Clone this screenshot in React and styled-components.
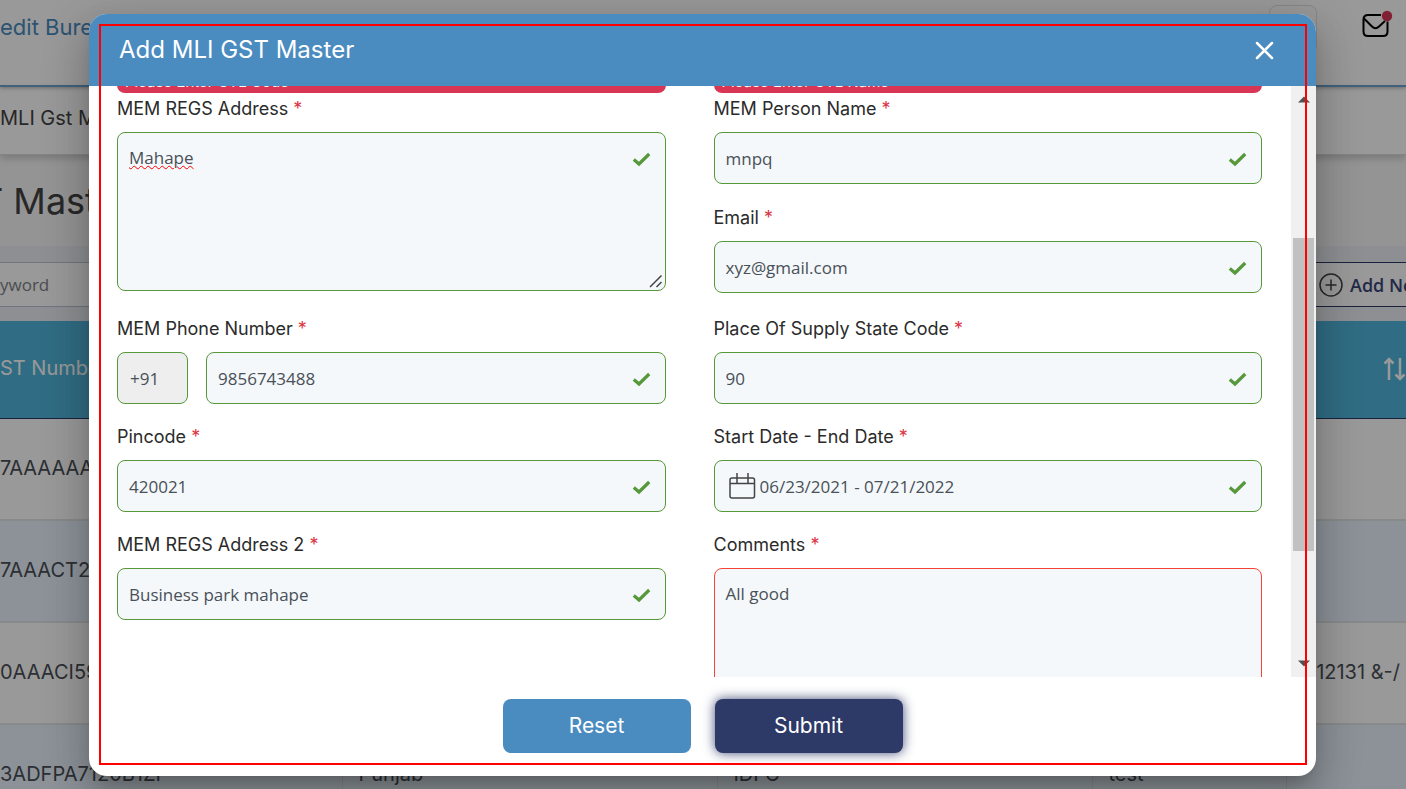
import React from "react";
import styled, { createGlobalStyle, css } from "styled-components";

const display = `Inter, "Liberation Sans", sans-serif`;
const body = `"Open Sans", "Noto Sans", sans-serif`;

const GlobalStyle = createGlobalStyle`
  * { box-sizing: border-box; }
  html, body, #root { height: 100%; }
  body { margin: 0; overflow: hidden; background: #fff; font-family: ${display}; color: #444; }
`;

const Screen = styled.div`
  position: relative;
  height: 100%;
  overflow: hidden;
`;

/* ---------- page behind the dialog ---------- */

const Page = styled.div`
  height: 100%;
  overflow: hidden;
  display: flex;
  flex-direction: column;
  white-space: nowrap;
`;

const TopBar = styled.header`
  position: relative;
  z-index: 1;
  flex: none;
  height: 87px;
  display: flex;
  justify-content: space-between;
  border-bottom: 2px solid #6ba3d0;
  box-shadow: 0 1px 4px rgba(0, 0, 0, 0.3);
`;

const Brand = styled.span`
  padding-top: 12px;
  font-size: 22px;
  line-height: 30px;
  color: #4a8bc0;
`;

const TopActions = styled.div`
  display: flex;
  gap: 44px;
  padding: 5px 13px 0 0;
`;

const Avatar = styled.div`
  width: 48px;
  height: 48px;
  border: 1px solid #e2e2e2;
  border-radius: 8px;
`;

const MailButton = styled.button`
  height: 36px;
  padding: 4px 0 0;
  border: 0;
  background: none;
`;

const Crumbs = styled.nav`
  position: relative;
  flex: none;
  height: 68px;
  padding-top: 18px;
  font-size: 20px;
  line-height: 26px;
  background: #fff;
  border-bottom: 1px solid #ddd;
  box-shadow: 0 3px 8px rgba(0, 0, 0, 0.2);
`;

const PageTitle = styled.h1`
  flex: none;
  height: 91px;
  margin: 0;
  padding-top: 24px;
  font-size: 36px;
  line-height: 44px;
  font-weight: 400;
  text-indent: -20px;
  background: #f7f7f7;
`;

const Toolbar = styled.div`
  flex: none;
  height: 75px;
  padding-top: 16px;
  display: flex;
  justify-content: space-between;
  align-items: flex-start;
  background: #edeff4;
`;

const Search = styled.input`
  width: 300px;
  height: 45px;
  padding: 0;
  border: 1px solid #b9c2d0;
  border-left: 0;
  background: #fff;
  font: 17px ${body};
  color: #333;
  &::placeholder { color: #7c8288; opacity: 1; }
`;

const AddButton = styled.button`
  width: 98px;
  height: 45px;
  padding: 0 0 0 10px;
  display: flex;
  align-items: center;
  gap: 7px;
  overflow: hidden;
  border: 1px solid #2d3966;
  border-right: 0;
  background: #fff;
  color: #3b4678;
  font: 600 18px ${body};
  white-space: nowrap;
  svg { flex: none; }
`;

const Table = styled.table`
  width: 100%;
  table-layout: fixed;
  border-collapse: collapse;
  font-size: 20px;
  text-align: left;
`;

const Th = styled.th`
  height: 97px;
  padding: 0 0 2px;
  overflow: hidden;
  font-weight: 400;
  color: #fff;
  background: #51b6dc;
  border-bottom: 1px solid #2d3966;
  text-align: ${(p) => (p.$end ? "right" : "left")};
  svg { display: inline-block; vertical-align: middle; }
`;

const Tr = styled.tr`
  height: 102px;
  background: ${(p) => (p.$tint ? "#e9f3fd" : "#fff")};
`;

const Td = styled.td`
  padding: 0 6px 2px ${(p) => (p.$first ? 0 : 16)}px;
  border-bottom: 2px solid #e3e5e7;
  border-right: ${(p) => (p.$end ? 0 : 1)}px solid #dfe1e3;
  text-align: ${(p) => (p.$end ? "right" : "left")};
  color: #4a4f56;
`;

/* ---------- dialog ---------- */

const Backdrop = styled.div`
  position: absolute;
  inset: 0;
  z-index: 2;
  display: flex;
  padding: 14px 90px 13px 89px;
  background: rgba(0, 0, 0, 0.4);
`;

const Dialog = styled.section`
  flex: 1;
  min-width: 0;
  display: flex;
  flex-direction: column;
  overflow: hidden;
  border-radius: 18px;
  background: #fff;
  box-shadow: 0 11px 15px -7px rgba(0, 0, 0, 0.2), 0 24px 38px 3px rgba(0, 0, 0, 0.14),
    0 9px 46px 8px rgba(0, 0, 0, 0.12);
`;

const Highlight = styled.div`
  position: absolute;
  inset: 24px 99px;
  border: 2px solid #f00;
  pointer-events: none;
`;

const DialogHeader = styled.header`
  flex: none;
  height: 72px;
  padding: 0 40px 0 30px;
  display: flex;
  align-items: center;
  justify-content: space-between;
  background: #4a8bc0;
  color: #fff;
`;

const DialogTitle = styled.h2`
  margin: 0;
  font-size: 24px;
  line-height: 32px;
  font-weight: 400;
`;

const CloseButton = styled.button`
  height: 24px;
  padding: 0;
  border: 0;
  background: none;
  svg { display: block; }
`;

const DialogBody = styled.div`
  flex: 1;
  min-height: 0;
  display: flex;
  overflow: hidden;
`;

const Form = styled.form`
  flex: 1;
  min-width: 0;
  margin-top: -20px;
  padding: 0 29px 0 28px;
`;

const Row = styled.div`
  display: grid;
  grid-template-columns: 1fr 1fr;
  column-gap: 48px;
  margin-bottom: ${(p) => p.$gap || 0}px;
`;

const Stack = styled.div`
  display: flex;
  flex-direction: column;
  gap: 21px;
`;

const ErrorNote = styled.p`
  height: 27px;
  margin: 0;
  padding: 6px 8px 1px;
  border-radius: 8px;
  background: #d93655;
  color: #fff;
  font-size: 15px;
  line-height: 20px;
`;

const FieldBox = styled.div`
  display: flex;
  flex-direction: column;
  gap: 11px;
`;

const Label = styled.label`
  padding-top: 1px;
  font-size: 18px;
  line-height: 24px;
  color: #2b2b2b;
  white-space: nowrap;
  span { color: #dc3545; }
`;

const Control = styled.div`
  position: relative;
  display: flex;
  gap: 18px;
`;

const inputStyle = css`
  width: 100%;
  min-width: 0;
  border: 1px solid ${(p) => (p.$invalid ? "#f44336" : "#56983a")};
  border-radius: 8px;
  background: #f4f8fb;
  color: #495057;
  font-family: ${body};
  font-size: 17px;
  outline: none;
`;

const Input = styled.input`
  ${inputStyle}
  height: 52px;
  padding: 0 48px 0 ${(p) => (p.$icon ? 45 : 11)}px;
`;

const Prefix = styled(Input)`
  flex: none;
  width: 71px;
  padding: 0 12px;
  background: #eee;
`;

const TextArea = styled.textarea`
  ${inputStyle}
  display: block;
  height: 159px;
  padding: 12px 48px 12px 11px;
  line-height: 26px;
  resize: none;
  ${(p) => p.$misspelt && "text-decoration: underline wavy #f00 1px;"}
`;

const Check = styled.svg`
  position: absolute;
  top: 20px;
  right: 15px;
`;

const Grip = styled.svg`
  position: absolute;
  right: 3px;
  bottom: 3px;
`;

const CalendarIcon = styled.svg`
  position: absolute;
  top: 12px;
  left: 14px;
`;

const Scrollbar = styled.div`
  flex: none;
  width: 25px;
  padding: 10px 2px;
  display: flex;
  flex-direction: column;
  align-items: center;
  background: #f0f0f0;
`;

const Track = styled.div`
  flex: 1;
  align-self: stretch;
  padding-top: 135px;
`;

const Thumb = styled.div`
  height: 313px;
  background: #c1c1c1;
`;

const DialogFooter = styled.footer`
  flex: none;
  padding: 22px 0 23px;
  display: flex;
  justify-content: center;
  gap: 24px;
`;

const ActionButton = styled.button`
  width: 188px;
  height: 54px;
  padding: 0 0 2px;
  border: 0;
  border-radius: 8px;
  font: 400 21px ${display};
  color: #fff;
  background: ${(p) => (p.$primary ? "#2d3966" : "#4a8bc0")};
  box-shadow: ${(p) => (p.$primary ? "0 0 12px rgba(45, 57, 102, 0.9)" : "none")};
`;

function Tick() {
  return (
    <Check width="19" height="15" viewBox="0 0 19 15" aria-hidden="true">
      <path d="M1.800 7.500 7 12 17.200 2" fill="none" stroke="#56983a" strokeWidth="3.200" />
    </Check>
  );
}

function Field({ id, label, children }) {
  return (
    <FieldBox>
      <Label htmlFor={id}>
        {label} <span>*</span>
      </Label>
      <Control>{children}</Control>
    </FieldBox>
  );
}

function TextField({ id, label, value }) {
  return (
    <Field id={id} label={label}>
      <Input id={id} defaultValue={value} />
      <Tick />
    </Field>
  );
}

const rows = [
  ["7AAAAAA0000A1Z", "", "", "", ""],
  ["7AAACT2727Q1Z", "", "", "", ""],
  ["0AAACI5950L1Z", "", "", "", "12131 &-/"],
  ["3ADFPA7120B1ZF", "Punjab", "IDFC", "test", ""],
];

export default function App() {
  return (
    <Screen>
      <GlobalStyle />
      <Page>
        <TopBar>
          <Brand>edit Bureau</Brand>
          <TopActions>
            <Avatar />
            <MailButton aria-label="Messages">
              <svg width="32" height="30" viewBox="0 0 32 30" fill="none">
                <path
                  d="M20 6H7Q2.500 6 2.500 10.500V22.500Q2.500 27 7 27H22Q26.500 27 26.500 22.500V12.500"
                  stroke="#000"
                  strokeWidth="2"
                />
                <path d="M3 9.500 11 17.500Q14.500 21 18 17.500L24 12" stroke="#000" strokeWidth="2" />
                <circle cx="26" cy="7" r="5.200" fill="#d93655" />
              </svg>
            </MailButton>
          </TopActions>
        </TopBar>
        <Crumbs>MLI Gst Master</Crumbs>
        <PageTitle>T Master</PageTitle>
        <Toolbar>
          <Search aria-label="Search" placeholder="yword" />
          <AddButton>
            <svg width="24" height="24" viewBox="0 0 24 24" fill="none" stroke="#444" strokeWidth="1.500">
              <circle cx="12" cy="12" r="11" />
              <path d="M6.500 12h11M12 6.500v11" />
            </svg>
            Add New
          </AddButton>
        </Toolbar>
        <Table>
          <colgroup>
            <col width="342" />
            <col width="375" />
            <col width="375" />
            <col />
            <col width="120" />
          </colgroup>
          <thead>
            <tr>
              <Th>ST Number</Th>
              <Th />
              <Th />
              <Th />
              <Th $end>
                <svg width="22" height="24" viewBox="0 0 22 24" fill="none" stroke="#fff" strokeWidth="2.500">
                  <path d="M5 23V2M0.500 6.500 5 2l4.500 4.500M16 1v21M11.500 17.500 16 22l4.500-4.500" />
                </svg>
              </Th>
            </tr>
          </thead>
          <tbody>
            {rows.map((row, i) => (
              <Tr key={row[0]} $tint={i % 2 === 1}>
                {row.map((cell, j) => (
                  <Td key={j} $first={j === 0} $end={j === 4}>
                    {cell}
                  </Td>
                ))}
              </Tr>
            ))}
          </tbody>
        </Table>
      </Page>

      <Backdrop>
        <Dialog role="dialog" aria-labelledby="dialog-title">
          <DialogHeader>
            <DialogTitle id="dialog-title">Add MLI GST Master</DialogTitle>
            <CloseButton aria-label="Close">
              <svg width="24" height="24" viewBox="0 0 24 24" stroke="#fff" strokeWidth="2.500" strokeLinecap="round">
                <path d="M5 5 20 20M20 5 5 20" />
              </svg>
            </CloseButton>
          </DialogHeader>
          <DialogBody>
            <Form>
              <Row $gap={3}>
                <ErrorNote>Please Enter CTL Code</ErrorNote>
                <ErrorNote>Please Enter CTL Name</ErrorNote>
              </Row>
              <Row $gap={23}>
                <Field id="address" label="MEM REGS Address">
                  <TextArea id="address" defaultValue="Mahape" $misspelt />
                  <Tick />
                  <Grip width="14" height="14" viewBox="0 0 14 14" stroke="#444" strokeWidth="1.500">
                    <path d="M1 13 12.500 1.500M7.500 13 12.500 8" />
                  </Grip>
                </Field>
                <Stack>
                  <TextField id="person" label="MEM Person Name" value="mnpq" />
                  <TextField id="email" label="Email" value="xyz@gmail.com" />
                </Stack>
              </Row>
              <Row $gap={20}>
                <Field id="phone" label="MEM Phone Number">
                  <Prefix aria-label="Country code" defaultValue="+91" readOnly />
                  <Input id="phone" defaultValue="9856743488" />
                  <Tick />
                </Field>
                <TextField id="state" label="Place Of Supply State Code" value="90" />
              </Row>
              <Row $gap={20}>
                <TextField id="pincode" label="Pincode" value="420021" />
                <Field id="dates" label="Start Date - End Date">
                  <Input id="dates" defaultValue="06/23/2021 - 07/21/2022" $icon />
                  <CalendarIcon width="28" height="28" viewBox="0 0 28 28" fill="none" stroke="#444" strokeWidth="1.500">
                    <rect x="2" y="6" width="24.500" height="20" rx="2" />
                    <path d="M2 11.500h24.500M9 1v10.500M20 1v10.500" />
                  </CalendarIcon>
                  <Tick />
                </Field>
              </Row>
              <Row>
                <TextField id="address2" label="MEM REGS Address 2" value="Business park mahape" />
                <Field id="comments" label="Comments">
                  <TextArea id="comments" defaultValue="All good" $invalid />
                </Field>
              </Row>
            </Form>
            <Scrollbar aria-hidden="true">
              <svg width="12" height="7" viewBox="0 0 12 7">
                <path d="M0 6.500 6 0.500 12 6.500Z" fill="#505050" />
              </svg>
              <Track>
                <Thumb />
              </Track>
              <svg width="12" height="7" viewBox="0 0 12 7">
                <path d="M0 0.500 6 6.500 12 0.500Z" fill="#505050" />
              </svg>
            </Scrollbar>
          </DialogBody>
          <DialogFooter>
            <ActionButton type="button">Reset</ActionButton>
            <ActionButton type="button" $primary>
              Submit
            </ActionButton>
          </DialogFooter>
        </Dialog>
        <Highlight />
      </Backdrop>
    </Screen>
  );
}
